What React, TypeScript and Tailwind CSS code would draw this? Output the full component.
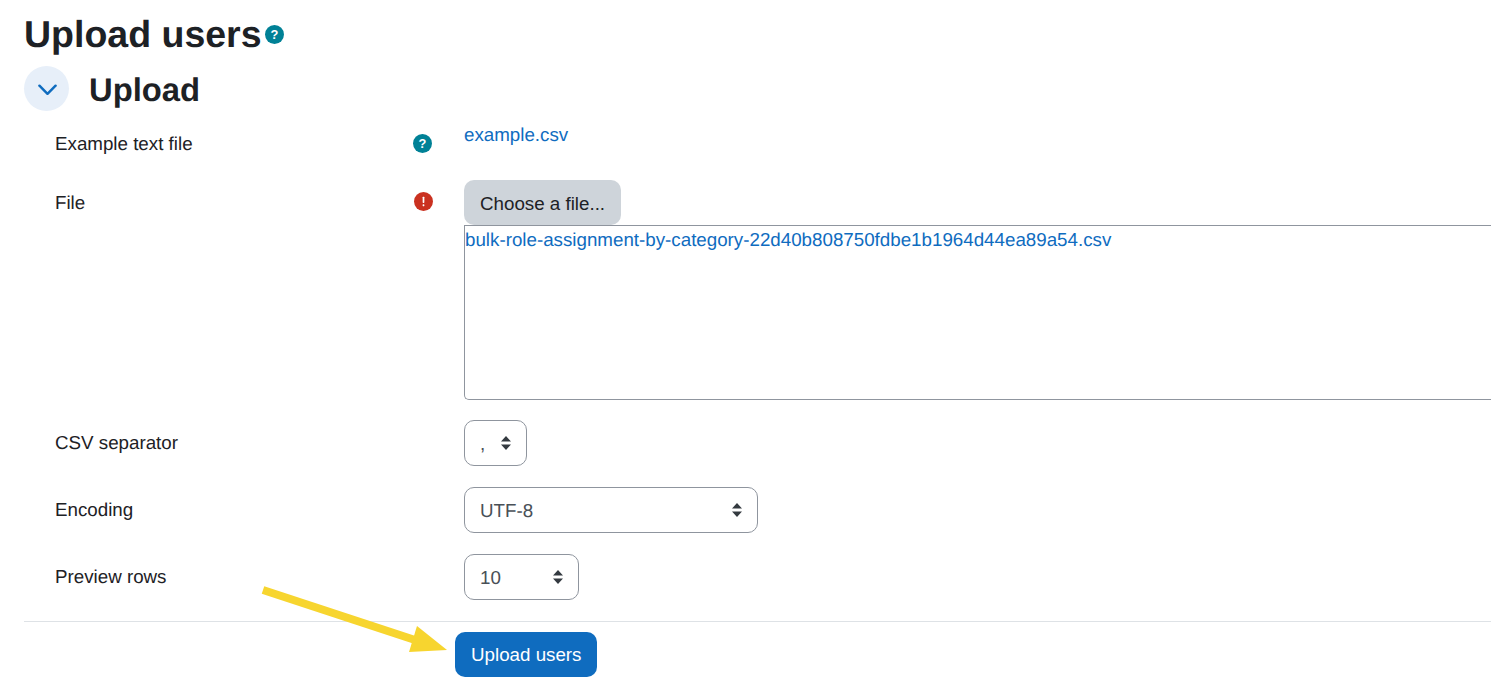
import React from 'react';

function HelpIcon({ className = '' }: { className?: string }) {
  return (
    <svg viewBox="0 0 20 20" className={`w-[19px] h-[19px] ${className}`}>
      <circle cx="10" cy="10" r="10" fill="#008196" />
      <text x="10" y="14.8" textAnchor="middle" fontSize="13.5" fontWeight="700" fill="#fff" fontFamily="Liberation Sans, sans-serif">?</text>
    </svg>
  );
}

function RequiredIcon({ className = '' }: { className?: string }) {
  return (
    <svg viewBox="0 0 20 20" className={`w-[19px] h-[19px] ${className}`}>
      <circle cx="10" cy="10" r="10" fill="#ca3120" />
      <rect x="9.1" y="5" width="1.8" height="6.5" rx="0.6" fill="#fff" />
      <rect x="9.1" y="13" width="1.8" height="2" rx="0.5" fill="#fff" />
    </svg>
  );
}

function SelectArrows() {
  return (
    <svg viewBox="0 0 10 14" className="w-[10px] h-[14px] shrink-0">
      <path d="M5 0 L10 5.5 H0 Z M5 14 L0 8.5 H10 Z" fill="#343a40" />
    </svg>
  );
}

function Select({ value, width }: { value: string; width: string }) {
  return (
    <div className={`${width} h-[46px] border border-[#8f959e] rounded-[10px] bg-white pl-[15px] pr-[15px] flex items-center justify-between text-[#495057]`}>
      <span className="pt-[1px]">{value}</span>
      <SelectArrows />
    </div>
  );
}

function Row({ label, icon, children, className = '' }: { label: string; icon?: React.ReactNode; children: React.ReactNode; className?: string }) {
  return (
    <div className={`flex ${className}`}>
      <div className="w-[440px] pl-[31px] pr-[31px] flex justify-between items-start shrink-0">
        <span>{label}</span>
        {icon}
      </div>
      <div className="flex-1">{children}</div>
    </div>
  );
}

export default function App() {
  const rows = [
    { label: 'CSV separator', value: ',', width: 'w-[63px]' },
    { label: 'Encoding', value: 'UTF-8', width: 'w-[294px]' },
    { label: 'Preview rows', value: '10', width: 'w-[115px]' },
  ];

  return (
    <div className="relative w-[1491px] h-[693px] overflow-hidden bg-white pl-6 text-[#1d2125] text-[18.75px] leading-[28px] [text-rendering:geometricPrecision] font-['Liberation_Sans',sans-serif]">
      {/* Page heading */}
      <div className="flex items-center h-[46px] mt-[11px]">
        <h1 className="text-[37.5px] leading-[46px] font-bold">Upload users</h1>
        <HelpIcon className="ml-[3px] mt-[1px]" />
      </div>

      {/* Section heading */}
      <div className="flex items-center mt-[9px] h-[45px]">
        <div className="w-[45px] h-[45px] rounded-full bg-[#e7eff9] flex items-center justify-center">
          <svg viewBox="0 0 20 12" className="w-[19px] h-[12px] mt-[2px] ml-[1px]" fill="none" stroke="#0f6cbf" strokeWidth="2.6" strokeLinecap="round" strokeLinejoin="round">
            <path d="M1.5 1.5 L10 10 L18.5 1.5" />
          </svg>
        </div>
        <h2 className="ml-5 text-[32.8px] leading-[45px] font-bold pt-[1px]">Upload</h2>
      </div>

      {/* Form */}
      <div className="mt-[10px]">
        <Row label="Example text file" icon={<HelpIcon className="mt-[4px] mr-[1px]" />} className="h-[59px] pt-[9px]">
          <a className="text-[#0f6cbf] block -mt-[9px]">example.csv</a>
        </Row>

        <Row label="File" icon={<RequiredIcon className="mt-[3px]" />} className="pt-[9px]">
          <div className="-mt-[9px]">
            <button className="block h-[45px] px-4 pt-[2px] rounded-[10px] bg-[#ced4da] text-[#1d2125]">Choose a file...</button>
            <div className="h-[175px] border border-[#8f959e] border-r-0 rounded-bl-[5px] pl-0 text-[#0f6cbf]">
              bulk-role-assignment-by-category-22d40b808750fdbe1b1964d44ea89a54.csv
            </div>
          </div>
        </Row>

        <div className="mt-5 flex flex-col gap-[21px]">
          {rows.map((r) => (
            <Row key={r.label} label={r.label} className="h-[46px] items-center">
              <Select value={r.value} width={r.width} />
            </Row>
          ))}
        </div>
      </div>

      <div className="mt-[21px] border-t border-[#dee2e6]" />

      <button className="block ml-[431px] mt-[10px] h-[45px] px-4 rounded-[10px] bg-[#0f6cbf] text-white">Upload users</button>

      {/* Annotation arrow */}
      <svg className="absolute left-0 top-0 pointer-events-none" width="1491" height="693">
        <path d="M263 590 L415 640" stroke="#f7d52f" strokeWidth="8" fill="none" />
        <path d="M417 626 L447 650 L409 652 Z" fill="#f7d52f" />
      </svg>
    </div>
  );
}
